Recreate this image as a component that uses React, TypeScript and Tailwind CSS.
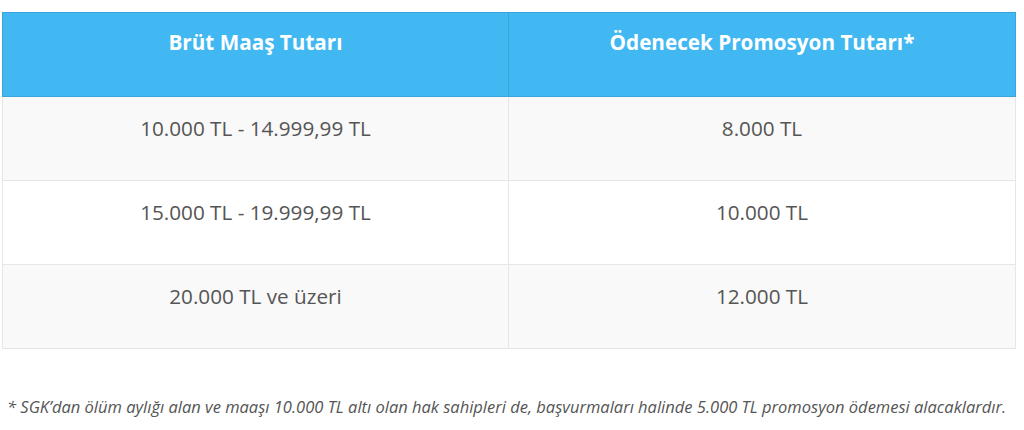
import React from "react";

const rows = [
  ["10.000 TL - 14.999,99 TL", "8.000 TL"],
  ["15.000 TL - 19.999,99 TL", "10.000 TL"],
  ["20.000 TL ve üzeri", "12.000 TL"],
];

export default function App() {
  return (
    <div
      className="w-[1024px] h-[430px] bg-white overflow-hidden"
      style={{ fontFamily: '"Open Sans", "Noto Sans", sans-serif' }}
    >
      <div className="pt-[12px] pl-[2px] pr-[8px]">
        <table className="w-[1014px] border-collapse table-fixed">
          <thead>
            <tr className="bg-[#41b8f2]">
              <th className="w-[506px] h-[84px] border border-[#3aa5da] align-top pt-[15px] text-white text-[20.7px] font-bold leading-[28px]">
                Brüt Maaş Tutarı
              </th>
              <th className="h-[84px] border border-[#3aa5da] align-top pt-[15px] text-white text-[20.7px] font-bold leading-[28px]">
                Ödenecek Promosyon Tutarı*
              </th>
            </tr>
          </thead>
          <tbody>
            {rows.map((r, i) => (
              <tr key={i} className={i % 2 === 0 ? "bg-[#f9f9f9]" : "bg-white"}>
                {r.map((c, j) => (
                  <td
                    key={j}
                    className="h-[84px] border border-[#e6e6e6] align-top pt-[17px] text-center text-[#555] text-[20.7px] leading-[28px]"
                  >
                    {c}
                  </td>
                ))}
              </tr>
            ))}
          </tbody>
        </table>
      </div>
      <p className="mt-[47px] pl-[7px] italic text-[#555] text-[16.5px] leading-[22px] whitespace-nowrap">
        * SGK’dan ölüm aylığı alan ve maaşı 10.000 TL altı olan hak sahipleri de, başvurmaları halinde 5.000 TL promosyon ödemesi alacaklardır.
      </p>
    </div>
  );
}
